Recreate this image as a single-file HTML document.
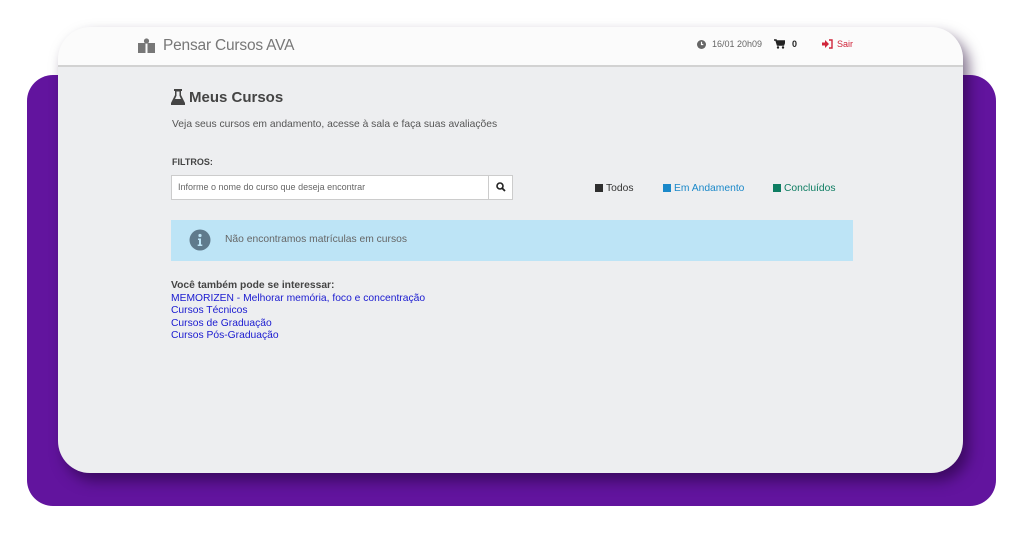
<!DOCTYPE html>
<html><head><meta charset="utf-8"><style>
*{margin:0;padding:0;box-sizing:border-box}
body{width:1024px;height:536px;background:#fff;position:relative;overflow:hidden;font-family:"Liberation Sans",sans-serif}
.purple{position:absolute;left:27px;top:75px;width:969px;height:431px;background:#62149e;border-radius:26px}
.card{position:absolute;left:58px;top:27px;width:905px;height:446px;background:#edeef0;border-radius:32px;overflow:hidden;box-shadow:6px 8px 14px rgba(30,0,50,.55)}
.hdr{position:absolute;left:0;top:0;width:100%;height:40px;background:#fbfbfb;border-bottom:2px solid #d2d2d2}
.abs{position:absolute;white-space:nowrap}
a{color:#1a1ad0;text-decoration:none}
</style></head><body>
<div class="purple"></div>
<div class="card">
 <div class="hdr">
  <svg class="abs" style="left:80px;top:11px" width="17" height="15" viewBox="0 0 17 15"><circle cx="8.5" cy="3" r="2.6" fill="#777"/><path d="M0 5h7.5v10H0zM9.5 5H17v10H9.5z" fill="#777"/></svg>
  <div class="abs" style="left:105px;top:10px;font-size:15.5px;color:#777;letter-spacing:-0.2px">Pensar Cursos AVA</div>
  <svg class="abs" style="left:639px;top:13px" width="9" height="9" viewBox="0 0 10 10"><circle cx="5" cy="5" r="5" fill="#666"/><path d="M5 2v3h2" stroke="#fff" stroke-width="1.3" fill="none"/></svg>
  <div class="abs" style="left:654px;top:12px;font-size:9px;color:#666">16/01 20h09</div>
  <svg class="abs" style="left:716px;top:12px" width="11" height="10" viewBox="0 0 11 10"><path d="M0 1h2l1.5 5h6L11 2H3" stroke="#222" stroke-width="1.6" fill="#222"/><circle cx="4" cy="8.5" r="1.2" fill="#222"/><circle cx="9" cy="8.5" r="1.2" fill="#222"/></svg>
  <div class="abs" style="left:734px;top:12px;font-size:9px;color:#222;font-weight:bold">0</div>
  <svg class="abs" style="left:764px;top:12px" width="11" height="10" viewBox="0 0 11 10"><path d="M0 3.5h3V1l4 4-4 4V6.5H0z" fill="#d0243a"/><path d="M7 1h3v8H7" stroke="#d0243a" stroke-width="1.4" fill="none"/></svg>
  <div class="abs" style="left:779px;top:12px;font-size:9px;color:#d0243a">Sair</div>
 </div>
 <svg class="abs" style="left:113px;top:62px" width="14" height="16" viewBox="0 0 14 16"><path d="M3 0h8v2H10v4l4 8v2H0v-2l4-8V2H3z" fill="#444"/><path d="M5.5 2.5h3v4.3l2.8 6.2H2.7l2.8-6.2z" fill="#edeef0"/><path d="M3.8 10h6.4l1.3 3H2.5z" fill="#444"/></svg>
 <div class="abs" style="left:131px;top:62px;font-size:15px;font-weight:bold;color:#444">Meus Cursos</div>
 <div class="abs" style="left:114px;top:92px;font-size:10.3px;color:#555">Veja seus cursos em andamento, acesse à sala e faça suas avaliações</div>
 <div class="abs" style="left:114px;top:130px;font-size:9px;font-weight:bold;color:#444">FILTROS:</div>
 <div class="abs" style="left:113px;top:148px;width:342px;height:25px;background:#fff;border:1px solid #ccc"></div>
 <div class="abs" style="left:120px;top:155px;font-size:9px;color:#666">Informe o nome do curso que deseja encontrar</div>
 <div class="abs" style="left:430px;top:148px;width:1px;height:25px;background:#ccc"></div>
 <svg class="abs" style="left:438px;top:155px" width="10" height="10" viewBox="0 0 10 10"><circle cx="4" cy="4" r="3" stroke="#222" stroke-width="1.6" fill="none"/><path d="M6.2 6.2L9 9" stroke="#222" stroke-width="1.8"/></svg>
 <div class="abs" style="left:537px;top:157px;width:8px;height:8px;background:#2e2e2e"></div>
 <div class="abs" style="left:548px;top:156px;font-size:10.3px;color:#333;line-height:12px">Todos</div>
 <div class="abs" style="left:605px;top:157px;width:8px;height:8px;background:#1a88c9"></div>
 <div class="abs" style="left:616px;top:156px;font-size:10.3px;color:#1a88c9;line-height:12px">Em Andamento</div>
 <div class="abs" style="left:715px;top:157px;width:8px;height:8px;background:#0e7d62"></div>
 <div class="abs" style="left:726px;top:156px;font-size:10.3px;color:#0e7d62;line-height:12px">Concluídos</div>
 <div class="abs" style="left:113px;top:193px;width:682px;height:41px;background:#bde4f6"></div>
 <svg class="abs" style="left:131px;top:202px" width="22" height="22" viewBox="0 0 22 22"><circle cx="11" cy="11" r="10.5" fill="#5f7a8c"/><circle cx="11" cy="6.5" r="1.6" fill="#bde4f6"/><path d="M9 9.5h3v6h1.3v1.5H8.7v-1.5H10v-4.5H9z" fill="#bde4f6"/></svg>
 <div class="abs" style="left:167px;top:207px;font-size:10.3px;color:#666">Não encontramos matrículas em cursos</div>
 <div class="abs" style="left:113px;top:253px;font-size:10.3px;line-height:12.5px;color:#444">
  <b>Você também pode se interessar:</b><br>
  <a>MEMORIZEN - Melhorar memória, foco e concentração</a><br>
  <a>Cursos Técnicos</a><br>
  <a>Cursos de Graduação</a><br>
  <a>Cursos Pós-Graduação</a>
 </div>
</div>
</body></html>
